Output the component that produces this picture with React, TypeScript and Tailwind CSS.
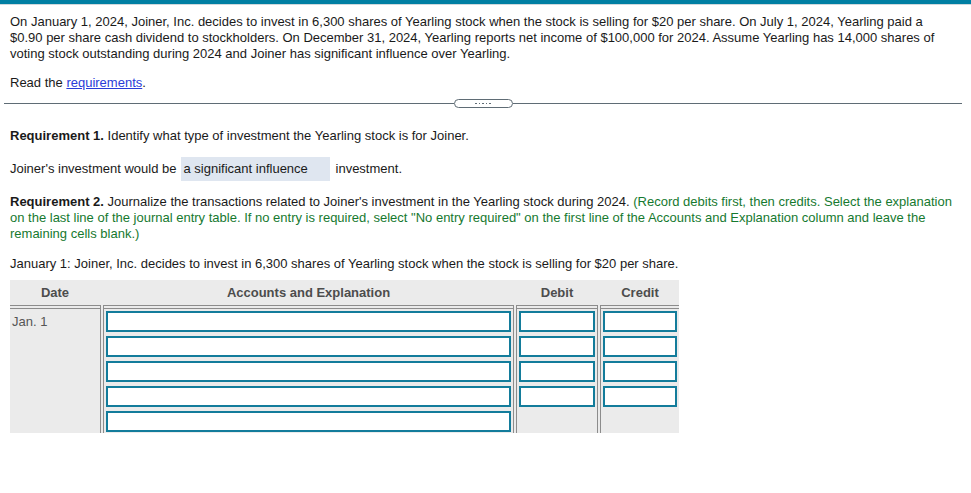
import React from 'react';

const Sep = () => <div className="w-[4px] shrink-0 border-x border-[#8c8c8c]" />;

const Cell = ({ w, children }: { w: string, children?: React.ReactNode }) => (
    <div className={`${w} shrink-0 px-[2px]`}>{children}</div>
);

const Box = () => <div className="h-[21px] w-full border-2 border-[#137c9b] bg-white" />;

const JournalTable = () => {
    const rows = [0, 1, 2, 3, 4];
    return (
        <div className="w-[669px] bg-[#ebebeb] text-[13px]">
            <div className="flex h-[25px] items-center font-bold text-[#4d4d4d]">
                <div className="w-[90px] text-center">Date</div>
                <Sep />
                <div className="w-[409px] text-center">Accounts and Explanation</div>
                <Sep />
                <div className="w-[80px] text-center">Debit</div>
                <Sep />
                <div className="w-[78px] text-center">Credit</div>
            </div>
            <div className="flex">
                <div className="h-[4px] w-[90px] border-y border-[#8c8c8c]" />
                <Sep />
                <div className="h-[4px] w-[409px] border-y border-[#8c8c8c]" />
                <Sep />
                <div className="h-[4px] w-[80px] border-y border-[#8c8c8c]" />
                <Sep />
                <div className="h-[4px] w-[78px] border-y border-[#8c8c8c]" />
            </div>
            <div className="flex">
                <div className="w-[90px] shrink-0 pl-[2px] pt-[5px] text-[#555]">Jan. 1</div>
                <Sep />
                <Cell w="w-[409px]">
                    <div className="flex flex-col gap-[4px] pb-[1px] pt-[2px]">
                        {rows.map(r => <Box key={r} />)}
                    </div>
                </Cell>
                <Sep />
                <Cell w="w-[80px]">
                    <div className="flex flex-col gap-[4px] pt-[2px]">
                        {rows.slice(0, 4).map(r => <Box key={r} />)}
                    </div>
                </Cell>
                <Sep />
                <Cell w="w-[78px]">
                    <div className="flex flex-col gap-[4px] pt-[2px]">
                        {rows.slice(0, 4).map(r => <Box key={r} />)}
                    </div>
                </Cell>
            </div>
        </div>
    );
};

export default function App() {
    return (
        <div className="min-h-[493px] bg-white text-[13px] leading-[16px] text-[#1a1a1a]" style={{ fontFamily: '"Liberation Sans", Arial, sans-serif' }}>
            <div className="h-[4px] bg-[#007fa3]" />
            <div className="h-[1px] bg-[#cfd8dc]" />

            <div className="px-[10px] pt-[9px]">
                <p className="pr-[20px]">
                    On January 1, 2024, Joiner, Inc. decides to invest in 6,300 shares of Yearling stock when the stock is selling for $20 per share. On July 1, 2024, Yearling paid a $0.90 per share cash dividend to stockholders. On December 31, 2024, Yearling reports net income of $100,000 for 2024. Assume Yearling has 14,000 shares of voting stock outstanding during 2024 and Joiner has significant influence over Yearling.
                </p>
                <p className="mt-[13px]">
                    Read the <span className="text-[#2a3bd8] underline">requirements</span>.
                </p>
            </div>

            <div className="mx-[4px] mt-[8px] flex w-[958px] items-center">
                <div className="h-[1px] flex-1 bg-[#5f6c75]" />
                <div className="flex h-[9px] w-[59px] items-center justify-center gap-[2px] rounded-full border border-[#5f6c75] bg-white">
                    {[0, 1, 2, 3, 4].map(i => <span key={i} className="h-[1.5px] w-[1.5px] bg-[#5f6c75]" />)}
                </div>
                <div className="h-[1px] flex-1 bg-[#5f6c75]" />
            </div>

            <div className="px-[10px]">
                <p className="mt-[20px]">
                    <span className="font-bold">Requirement 1.</span> Identify what type of investment the Yearling stock is for Joiner.
                </p>
                <div className="mt-[13px] flex items-center">
                    <span>Joiner's investment would be</span>
                    <div className="ml-[4px] flex h-[24px] w-[149px] items-center bg-[#dfe6f0] pl-[3px]">a significant influence</div>
                    <span className="ml-[6px]">investment.</span>
                </div>
                <p className="mt-[13px]">
                    <span className="font-bold">Requirement 2.</span> Journalize the transactions related to Joiner's investment in the Yearling stock during 2024. <span className="text-[#16792f]">(Record debits first, then credits. Select the explanation on the last line of the journal entry table. If no entry is required, select "No entry required" on the first line of the Accounts and Explanation column and leave the remaining cells blank.)</span>
                </p>
                <p className="mt-[14px]">
                    January 1: Joiner, Inc. decides to invest in 6,300 shares of Yearling stock when the stock is selling for $20 per share.
                </p>
                <div className="mt-[8px]">
                    <JournalTable />
                </div>
            </div>
        </div>
    );
}
